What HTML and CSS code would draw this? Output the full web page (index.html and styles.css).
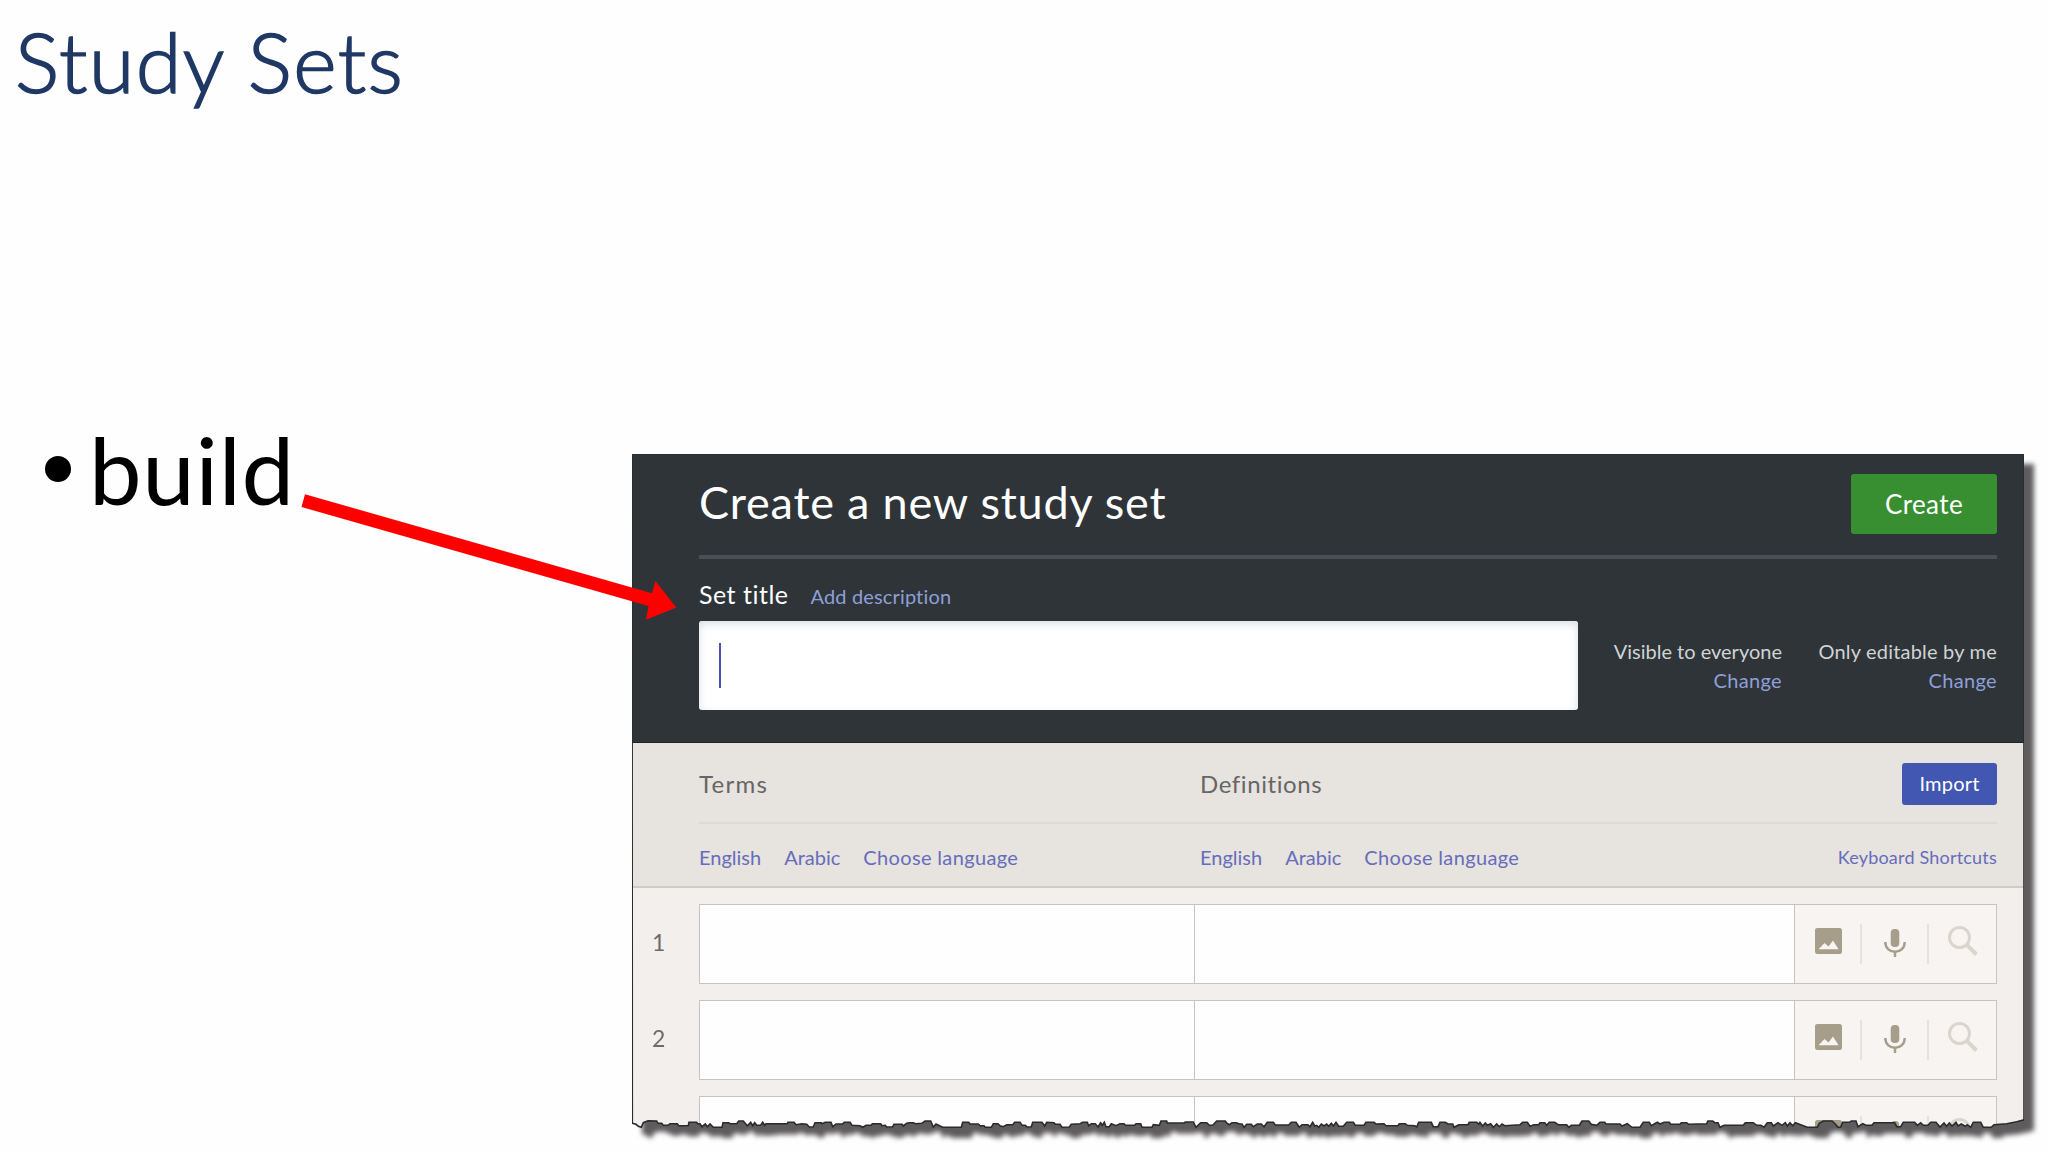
FILE: index.html
```html
<!DOCTYPE html>
<html lang="en">

<head>
    <meta charset="UTF-8">
    <title>Study Sets</title>
    <link rel="stylesheet" href="styles.css">
</head>

<body>
    <h1 class="slide-title">Study Sets</h1>

    <div class="slide-body">
        <ul class="bullets">
            <li><span class="dot"></span>build</li>
        </ul>

        <div class="shadow">
            <div class="panel">
                <!-- dark header -->
                <div class="panel-header">
                    <div class="title-bar">
                        <h2>Create a new study set</h2>
                        <button class="create-btn">Create</button>
                    </div>
                    <div class="set-labels">
                        <label class="set-title">Set title</label>
                        <a class="add-desc">Add description</a>
                    </div>
                    <div class="set-row">
                        <div class="title-input"><span class="caret"></span></div>
                        <div class="permission">
                            <span>Visible to everyone</span>
                            <a>Change</a>
                        </div>
                        <div class="permission editable">
                            <span>Only editable by me</span>
                            <a>Change</a>
                        </div>
                    </div>
                </div>

                <!-- column headings -->
                <div class="columns">
                    <div class="col-names">
                        <span class="terms">Terms</span>
                        <span>Definitions</span>
                        <button class="import-btn">Import</button>
                    </div>
                    <div class="col-langs">
                        <div class="langs"><a>English</a><a>Arabic</a><a class="choose">Choose language</a></div>
                        <div class="langs"><a>English</a><a>Arabic</a><a class="choose">Choose language</a></div>
                        <a class="shortcuts">Keyboard Shortcuts</a>
                    </div>
                </div>

                <!-- term rows -->
                <div class="rows">
                    <div class="row">
                        <span class="num">1</span>
                        <div class="term"></div>
                        <div class="definition"></div>
                        <div class="tools">
                            <div><svg class="i-img"><use href="#image" /></svg></div>
                            <div><svg class="i-mic"><use href="#mic" /></svg></div>
                            <div><svg class="i-search"><use href="#search" /></svg></div>
                        </div>
                    </div>
                    <div class="row">
                        <span class="num">2</span>
                        <div class="term"></div>
                        <div class="definition"></div>
                        <div class="tools">
                            <div><svg class="i-img"><use href="#image" /></svg></div>
                            <div><svg class="i-mic"><use href="#mic" /></svg></div>
                            <div><svg class="i-search"><use href="#search" /></svg></div>
                        </div>
                    </div>
                    <div class="row">
                        <span class="num"></span>
                        <div class="term"></div>
                        <div class="definition"></div>
                        <div class="tools">
                            <div><svg class="i-img"><use href="#image" /></svg></div>
                            <div><svg class="i-mic"><use href="#mic" /></svg></div>
                            <div><svg class="i-search"><use href="#search" /></svg></div>
                        </div>
                    </div>
                </div>
            </div>
            <svg class="outline" width="1392" height="690">
                <path id="outline-path" />
            </svg>
        </div>
    </div>

    <svg class="arrow" width="380" height="132">
        <path fill="#ff0000" d="M5 4.3 352 103.3 355.4 91 376.3 117.5 346 129.7 348.5 116 1.5 17Z" />
    </svg>

    <svg class="sprite">
        <defs>
            <symbol id="image" viewBox="0 0 27 26">
                <path fill="#a69d8b" fill-rule="evenodd" d="M2.5 0h22A2.5 2.5 0 0 1 27 2.5v21a2.5 2.5 0 0 1-2.5 2.5h-22A2.5 2.5 0 0 1 0 23.5v-21A2.5 2.5 0 0 1 2.5 0ZM3.5 21.3h20L18 12.5l-4.5 6-4-3.5Z" />
            </symbol>
            <symbol id="mic" viewBox="0 0 22 28">
                <rect x="6.7" y="0" width="8.6" height="18" rx="4" fill="#a69d8b" />
                <path d="M1.3 13c0 13 19.4 13 19.4 0M11 22.5V28" fill="none" stroke="#a69d8b" stroke-width="2.5" />
            </symbol>
            <symbol id="search" viewBox="0 0 30 30">
                <circle cx="11.5" cy="11.5" r="10" fill="none" stroke="#dad5cd" stroke-width="3" />
                <path d="M18.5 18.5 28.5 28.5" stroke="#dad5cd" stroke-width="4" />
            </symbol>
            <clipPath id="torn" clipPathUnits="userSpaceOnUse">
                <path id="torn-path" />
            </clipPath>
        </defs>
    </svg>

    <script>
        // Torn bottom edge, left to right, in thirds of a pixel.
        // Each strip starts at its own x offset.
        const strips = [
            [0, '37,190 48,193 55,199 64,202 70,188 84,182 110,183 114,190 125,190 130,196 145,196 150,191 172,191 176,197 205,197 207,187 230,187 233,191 240,191 246,200 256,192 262,200 270,192 280,202 306,202 309,188 326,188 330,191 350,191 356,183 370,183 382,197 392,187 398,197 404,188 410,196 422,196 428,187 434,196 438,191 502,191 504,187 522,187 528,194 545,191 560,193 568,201 580,200 585,188 604,188 606,191 616,187 633,187 638,200 648,192 668,192 673,187 690,187 696,196 720,197 728,202 738,196 754,196 757,191 782,191 786,197 796,196 800,201 818,200 822,193 846,193 850,198 860,190 868,188 880,188 886,191 905,190 915,183 932,183 940,201 948,192 968,202 1024,202 1028,187 1046,187 1050,192 1075,192 1080,197 1092,197 1096,202 1114,202 1120,191 1134,191 1140,197 1150,200 1160,194 1178,194 1184,187 1200,187 1206,196 1216,196 1222,201 1234,200 1238,187 1266,187 1274,198 1280,187 1302,188 1306,193 1320,193 1326,202 1348,201 1354,193'],
            [1380, '0,191 8,187 22,187 26,197 34,191 46,191 54,201 62,188 67,196 73,187 78,200 88,200 94,191 108,197 120,191 132,191 136,196 164,196 168,191 182,191 186,202 216,202 220,194 238,196 243,183 260,183 262,189 312,189 316,186 340,186 348,202 362,188 380,188 388,196 398,196 410,183 436,183 440,189 448,194 456,188 470,188 476,192 486,192 492,202 500,193 514,193 520,200 532,192 544,192 552,200 562,187 580,187 586,195 626,195 634,187 648,187 658,202 666,194 684,194 690,200 698,187 704,198 710,196 716,202 724,192 732,198 740,192 746,199 754,190 760,198 768,187 776,199 790,199 800,187 820,187 826,196 852,196 858,187 882,187 888,192 912,191 918,197 954,197 958,191 976,191 982,196 1004,197 1010,201 1016,187 1054,187 1060,200 1074,200 1080,187 1096,187 1104,192 1118,192 1122,202 1136,194 1164,194 1168,187 1190,187 1196,193 1200,187 1208,198 1216,189 1222,196 1232,191 1240,202 1250,192 1258,200 1266,192 1274,197 1320,194 1328,187 1342,187 1350,199 1362,194 1376,194'],
            [2760, '0,188 14,188 20,196 28,187 44,187 54,194 80,194 86,202 94,196 118,196 126,183 146,183 154,193 170,196 180,187 194,187 198,192 240,192 246,198 262,191 276,202 300,202 310,187 328,187 334,197 344,191 352,187 360,192 372,187 388,187 392,193 420,193 424,188 440,188 446,193 500,191 504,183 518,183 524,188 534,188 540,202 552,196 610,196 616,188 640,188 650,196 662,196 672,202 682,188 694,188 700,198 714,188 726,196 736,188 742,198 750,188 758,197 766,188 776,192 802,202 832,202 838,190 850,183 876,183 886,192 894,202 902,201 908,187 928,187 934,183 948,183 954,200 968,191 978,196 996,196 1002,188 1064,188 1070,200 1082,200 1090,187 1124,187 1132,196 1142,188 1150,196 1164,196 1172,187 1188,187 1200,201 1212,189 1220,199 1228,189 1236,198 1248,187 1254,198 1264,192 1276,199 1282,194 1292,202 1300,187 1322,187 1330,202 1354,202 1362,194 1400,191 1430,185 1450,180']
        ];

        const points = [];
        strips.forEach(([offset, list]) => {
            list.split(' ').forEach(pair => {
                const [x, y] = pair.split(',').map(Number);
                points.push(((x + offset) / 3 - 12).toFixed(1) + ' ' + (y / 3 + 606).toFixed(1));
            });
        });

        const d = 'M0 0L' + points.join('L') + 'L1392 665V0Z';
        document.getElementById('torn-path').setAttribute('d', d);
        document.getElementById('outline-path').setAttribute('d', d);
    </script>
</body>

</html>
```
FILE: styles.css
```css
* {
    margin: 0;
    padding: 0;
    box-sizing: border-box;
}

body {
    width: 2048px;
    height: 1152px;
    position: relative;
    overflow: hidden;
    background: #fefefe;
    font-family: Lato, "Liberation Sans", sans-serif;
}

/* Slide */
.slide-title {
    height: 454px;
    padding: 11px 0 0 15px;
    font-size: 83px;
    font-weight: 300;
    line-height: 100px;
    letter-spacing: 1.4px;
    color: #1f3864;
    -webkit-text-stroke: 1.6px #1f3864;
}

.slide-body {
    display: flex;
}

.bullets {
    width: 632px;
    margin-top: -40px;
    padding-left: 45px;
    list-style: none;
}

.bullets li {
    display: flex;
    align-items: center;
    height: 110px;
    font-size: 94px;
    line-height: 110px;
    letter-spacing: 0.7px;
    color: #000;
}

.dot {
    width: 26px;
    height: 26px;
    margin-right: 18px;
    border-radius: 50%;
    background: #000;
}

.arrow {
    position: absolute;
    left: 300px;
    top: 490px;
}

.sprite {
    position: absolute;
    width: 0;
    height: 0;
}

/* Panel */
.shadow {
    position: relative;
    filter: drop-shadow(10px 10px 2.5px #5f5c5e);
}

.panel {
    width: 1392px;
    height: 690px;
    background: #f2efec;
    clip-path: url(#torn);
}

.outline {
    position: absolute;
    left: 0;
    top: 0;
}

.outline path {
    fill: none;
    stroke: #2a2b2b;
    stroke-width: 1.6;
}

.panel-header {
    height: 289px;
    padding: 0 27px 0 67px;
    background: #2e3438;
    border-bottom: 1px solid #1f2628;
}

.title-bar {
    display: flex;
    justify-content: space-between;
    align-items: flex-start;
    height: 105px;
    padding-top: 20px;
    border-bottom: 4px solid #495055;
}

.title-bar h2 {
    margin-top: -2px;
    font-size: 45px;
    font-weight: 400;
    line-height: 60px;
    letter-spacing: 0.8px;
    color: #fff;
}

.create-btn {
    width: 146px;
    height: 60px;
    border: none;
    border-radius: 3px;
    background: #388f32;
    color: #fff;
    font-family: inherit;
    font-size: 26px;
    letter-spacing: 0.4px;
}

.set-labels {
    display: flex;
    align-items: baseline;
    height: 62px;
    padding-top: 17px;
}

.set-title {
    margin-right: 22px;
    font-size: 25px;
    line-height: 36px;
    letter-spacing: 0.5px;
    color: #fff;
}

.add-desc {
    font-size: 20px;
    letter-spacing: 0.15px;
    color: #8e9fd8;
}

.set-row {
    display: flex;
}

.title-input {
    width: 879px;
    height: 89px;
    padding: 22px 0 0 20px;
    border-radius: 3px;
    background: #fff;
    box-shadow: inset 0 3px 8px #d8dfe6;
}

.caret {
    display: block;
    width: 2px;
    height: 45px;
    background: #4a50b0;
}

.permission {
    display: flex;
    flex: 1;
    flex-direction: column;
    align-items: flex-end;
    padding-top: 16px;
    font-size: 20px;
    line-height: 29px;
    color: #d0d3d4;
}

.editable {
    flex: none;
    width: 215px;
    letter-spacing: 0.2px;
}

.permission a {
    letter-spacing: 0.35px;
    color: #8e9fd8;
}

/* Column headings */
.columns {
    height: 145px;
    padding: 0 27px 0 67px;
    background: #e7e3df;
    border-bottom: 2px solid #cfcbc8;
}

.col-names {
    display: grid;
    grid-template-columns: 501px 1fr auto;
    height: 81px;
    padding-top: 20px;
    border-bottom: 2px solid #dedad7;
    font-size: 24px;
    line-height: 42px;
    letter-spacing: 0.6px;
    color: #666;
}

.terms {
    letter-spacing: 1.3px;
}

.import-btn {
    width: 95px;
    height: 42px;
    padding-bottom: 3px;
    border: none;
    border-radius: 3px;
    background: #4257b2;
    color: #fff;
    font-family: inherit;
    font-size: 20px;
    letter-spacing: 0.2px;
}

.col-langs {
    display: grid;
    grid-template-columns: 501px 1fr auto;
    padding-top: 14px;
    font-size: 20px;
    line-height: 38px;
    color: #666dbb;
}

.langs {
    display: flex;
    gap: 23px;
}

.choose {
    letter-spacing: 0.35px;
}

.shortcuts {
    font-size: 18px;
    letter-spacing: 0.2px;
}

/* Rows */
.rows {
    padding-top: 16px;
}

.row {
    display: flex;
    height: 80px;
    margin-bottom: 16px;
    padding-right: 27px;
}

.num {
    width: 67px;
    padding-left: 20px;
    font-size: 23px;
    line-height: 76px;
    color: #6d6b68;
}

.term,
.definition,
.tools {
    border: 1px solid #c6c3c3;
    border-width: 1.5px;
    background: #fefefe;
}

.term {
    width: 495px;
    border-right: none;
}

.definition {
    width: 600px;
    border-right: none;
}

.tools {
    display: flex;
    flex: 1;
    padding: 19px 0;
    background: #f8f4f2;
}

.tools div {
    width: 67px;
    height: 40px;
    border-right: 2px solid #e6e2e0;
}

.tools div:last-child {
    border-right: none;
}

.i-img {
    width: 27px;
    height: 26px;
    margin: 4px 0 0 20px;
}

.i-mic {
    width: 22px;
    height: 28px;
    margin: 5px 0 0 22px;
}

.i-search {
    width: 30px;
    height: 30px;
    margin: 2px 0 0 19px;
}
```
